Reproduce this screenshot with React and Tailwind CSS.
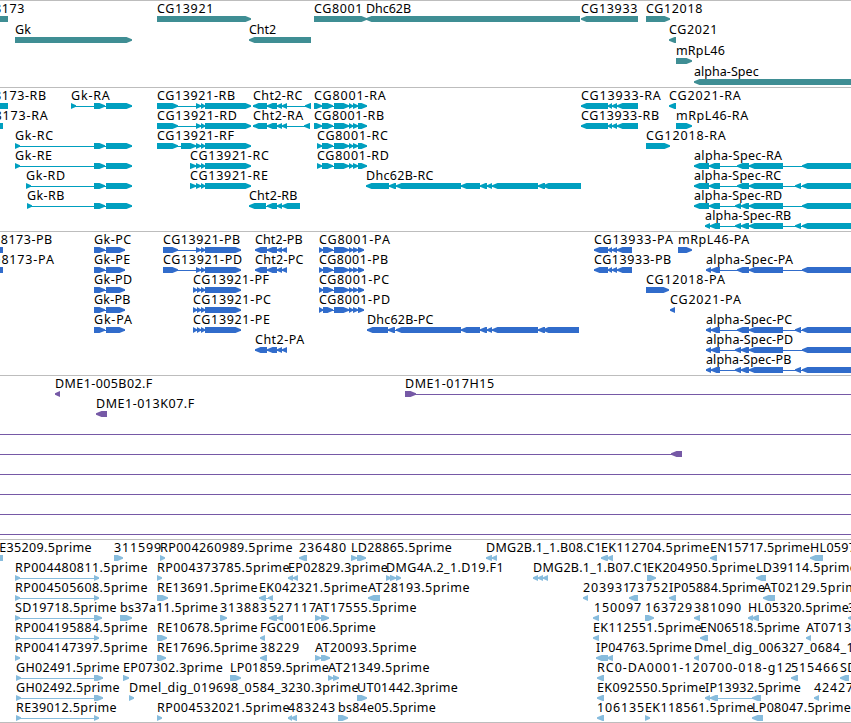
import { useLayoutEffect, useRef } from "react"

const WIDTH = 851
const TIP = 5.5

// advance of each label character in px, anything missing is 7
const ADVANCES = {
    C: 8, G: 9, D: 9, A: 9, R: 8, M: 10, H: 9, K: 8, U: 8, F: 6, L: 6, I: 3,
    m: 12, l: 3, i: 3, r: 5, t: 4, c: 6, s: 6, ".": 4, _: 6, "-": 6.7,
    0: 8, 1: 8, 2: 8, 3: 8, 4: 8, 5: 8, 6: 8, 7: 8, 8: 8, 9: 8,
}

// exon blocks shared between transcripts and proteins
const gk = [[94, 105], [106, 132]]
const gkP = [[94, 105], [106, 125]]
const cgTail = [[196, 201], [201, 205], [205, 251]]
const cgTailP = [[197, 201], [201, 205], [205, 241]]
const chtMid = [[267, 277], [277, 282], [282, 287]]
const cg8001 = [[322, 333], [334, 349], [349, 353], [353, 358], [358, 367]]
const cg8001P = [[319, 323], [323, 333], [334, 349], [349, 353], [353, 358], [358, 364]]
const cg13933 = [[581, 608], [608, 612], [612, 617], [617, 638]]
const cg13933P = [[594, 608], [608, 612], [612, 617], [617, 632]]
const specA = [[737, 749], [749, 783], [802, 870]]
const specC = [[737, 749], [749, 783], [795, 801], [802, 870]]
const specD = [[735, 741], [741, 749], [749, 783], [802, 870]]
const specB = [[735, 741], [741, 749], [749, 783], [795, 801], [802, 870]]
const dhcMid = [[396, 461], [461, 480], [480, 487], [487, 492], [492, 538], [538, 545]]

// feature: [label, label x, strand, exons, line end (optional)]
const tracks = [
    {
        name: "genes",
        className: "h-[87px] text-[#3f8e94]",
        rowClass: "h-[21px]",
        rows: [
            [
                ["CG8173", -24, "-", [[-30, 8]]],
                ["CG13921", 157, "+", [[157, 251]]],
                ["CG8001", 314, "+", [[314, 367]]],
                ["Dhc62B", 366, "-", [[366, 580]]],
                ["CG13933", 581, "-", [[581, 638]]],
                ["CG12018", 646, "+", [[646, 670]]],
            ],
            [
                ["Gk", 15, "+", [[15, 132]]],
                ["Cht2", 249, "-", [[249, 311]]],
                ["CG2021", 669, "-", [[669, 676]]],
            ],
            [["mRpL46", 676, "+", [[676, 692]]]],
            [["alpha-Spec", 694, "-", [[694, 870]]]],
        ],
    },
    {
        name: "transcripts",
        className: "h-36 text-[#009fbf]",
        rowClass: "h-5",
        rows: [
            [
                ["CG8173-RB", -24, "-", [[-30, 8]]],
                ["Gk-RA", 71, "+", [[71, 76], ...gk]],
                ["CG13921-RB", 157, "+", [[157, 178], ...cgTail]],
                ["Cht2-RC", 253, "-", [[253, 267], ...chtMid, [305, 311]]],
                ["CG8001-RA", 314, "+", [[314, 322], ...cg8001]],
                ["CG13933-RA", 581, "-", cg13933],
                ["CG2021-RA", 669, "-", [[669, 676]]],
            ],
            [
                ["CG8173-RA", -24, "-", [[-30, 3]]],
                ["CG13921-RD", 157, "+", [[157, 178], ...cgTail]],
                ["Cht2-RA", 253, "-", [[253, 267], ...chtMid, [304, 310]]],
                ["CG8001-RB", 314, "+", [[314, 322], ...cg8001]],
                ["CG13933-RB", 581, "-", cg13933],
                ["mRpL46-RA", 676, "+", [[676, 692]]],
            ],
            [
                ["Gk-RC", 15, "+", [[15, 20], ...gk]],
                ["CG13921-RF", 157, "+", [[157, 178], [181, 196], ...cgTail]],
                ["CG8001-RC", 317, "+", [[317, 322], ...cg8001]],
                ["CG12018-RA", 646, "+", [[646, 670]]],
            ],
            [
                ["Gk-RE", 15, "+", [[15, 20], ...gk]],
                ["CG13921-RC", 190, "+", [[190, 196], ...cgTail]],
                ["CG8001-RD", 317, "+", [[317, 322], ...cg8001]],
                ["alpha-Spec-RA", 694, "-", [[694, 709], [709, 720], ...specA]],
            ],
            [
                ["Gk-RD", 26, "+", [[26, 31], ...gk]],
                ["CG13921-RE", 190, "+", [[190, 196], ...cgTail]],
                ["Dhc62B-RC", 366, "-", [[366, 389], [389, 396], ...dhcMid, [543, 581]]],
                ["alpha-Spec-RC", 694, "-", [[694, 709], [709, 720], ...specC]],
            ],
            [
                ["Gk-RB", 27, "+", [[27, 32], ...gk]],
                ["Cht2-RB", 249, "-", [[249, 266], [267, 277], [277, 282], [282, 300]]],
                ["alpha-Spec-RD", 694, "-", [[694, 709], [709, 720], ...specD]],
            ],
            [["alpha-Spec-RB", 705, "-", [[705, 710], [710, 720], ...specB]]],
        ],
    },
    {
        name: "proteins",
        className: "h-36 text-[#316ccb]",
        rowClass: "h-5",
        rows: [
            [
                ["CG8173-PB", -17, "-", [[-30, 3]]],
                ["Gk-PC", 94, "+", gkP],
                ["CG13921-PB", 163, "+", [[163, 178], [196, 201], [201, 205], [205, 241]]],
                ["Cht2-PB", 255, "-", [[255, 267], ...chtMid]],
                ["CG8001-PA", 319, "+", cg8001P],
                ["CG13933-PA", 594, "-", cg13933P],
                ["mRpL46-PA", 678, "+", [[678, 692]]],
            ],
            [
                ["CG8173-PA", -17, "-", [[-30, 3]]],
                ["Gk-PE", 94, "+", gkP],
                ["CG13921-PD", 163, "+", [[163, 178], [196, 201], [201, 205], [205, 241]]],
                ["Cht2-PC", 255, "-", [[255, 267], ...chtMid]],
                ["CG8001-PB", 319, "+", cg8001P],
                ["CG13933-PB", 594, "-", cg13933P],
                ["alpha-Spec-PA", 706, "-", [[706, 711], [711, 720], ...specA]],
            ],
            [
                ["Gk-PD", 94, "+", gkP],
                ["CG13921-PF", 193, "+", [[193, 197], ...cgTailP]],
                ["CG8001-PC", 319, "+", cg8001P],
                ["CG12018-PA", 646, "+", [[646, 669]]],
            ],
            [
                ["Gk-PB", 94, "+", gkP],
                ["CG13921-PC", 193, "+", [[193, 197], ...cgTailP]],
                ["CG8001-PD", 319, "+", cg8001P],
                ["CG2021-PA", 670, "-", [[670, 675]]],
            ],
            [
                ["Gk-PA", 94, "+", gkP],
                ["CG13921-PE", 193, "+", [[193, 197], ...cgTailP]],
                ["Dhc62B-PC", 367, "-", [[367, 388], [388, 395], ...dhcMid, [543, 579]]],
                ["alpha-Spec-PC", 706, "-", [[706, 711], [711, 720], ...specC]],
            ],
            [
                ["Cht2-PA", 255, "-", [[255, 267], ...chtMid]],
                ["alpha-Spec-PD", 706, "-", [[706, 711], [711, 720], ...specD]],
            ],
            [["alpha-Spec-PB", 706, "-", [[706, 711], [711, 720], ...specB]]],
        ],
    },
    {
        name: "clones",
        className: "h-[164px] text-[#7659a6]",
        rowClass: "h-5",
        rows: [
            [
                ["DME1-005B02.F", 55, "-", [[55, 60]]],
                ["DME1-017H15", 405, "+", [[405, 416]], 870],
            ],
            [["DME1-013K07.F", 96, "-", [[96, 107]]]],
            [["", 0, "+", [[-10, -5]], 870]],
            [["", 0, "-", [[-20, -10], [671, 682]]]],
            [["", 0, "+", [[-10, -5]], 870]],
            [["", 0, "+", [[-10, -5]], 870]],
            [["", 0, "+", [[-10, -5]], 870]],
            [["", 0, "+", [[-10, -5]], 870]],
        ],
    },
    {
        name: "ests",
        className: "h-[183px] text-[#87bcdd]",
        rowClass: "h-5",
        rows: [
            [
                ["RE35209.5prime", -9, "-", [[-10, 3]]],
                ["311599", 114, "+", [[114, 123]]],
                ["RP004260989.5prime", 160, "+", [[160, 165]]],
                ["236480", 299, "-", [[299, 307]]],
                ["LD28865.5prime", 351, "+", [[351, 357], [357, 366]]],
                ["DMG2B.1_1.B08.C1", 486, "-", [[486, 492], [492, 497]]],
                ["EK112704.5prime", 601, "-", [[601, 608], [607, 613]]],
                ["EN15717.5prime", 710, "-", [[710, 717]]],
                ["HL05972.5prime", 810, "-", [[810, 823]]],
            ],
            [
                ["RP004480811.5prime", 15, "+", [[15, 20], [94, 99]]],
                ["RP004373785.5prime", 157, "+", [[157, 162]]],
                ["EP02829.3prime", 288, "-", [[288, 293], [293, 298]]],
                ["DMG4A.2_1.D19.F1", 386, "+", [[386, 391], [390, 396], [396, 401]]],
                ["DMG2B.1_1.B07.C1", 533, "-", [[533, 538], [538, 543], [543, 548]]],
                ["EK204950.5prime", 647, "+", [[647, 656]]],
                ["LD39114.5prime", 756, "-", [[756, 766]]],
            ],
            [
                ["RP004505608.5prime", 15, "+", [[15, 20], [94, 99]]],
                ["RE13691.5prime", 157, "+", [[157, 168]]],
                ["EK042321.5prime", 259, "-", [[259, 266], [268, 273]]],
                ["AT28193.5prime", 368, "-", [[368, 380]]],
                ["203931", 583, "-", [[583, 588]]],
                ["73752", 629, "-", [[629, 638]]],
                ["IP05884.5prime", 669, "-", [[669, 676]]],
                ["AT02129.5prime", 763, "-", [[763, 775]]],
            ],
            [
                ["SD19718.5prime", 15, "+", [[15, 20], [94, 102]]],
                ["bs37a11.5prime", 120, "+", [[120, 132]]],
                ["313883", 220, "+", [[220, 227]]],
                ["527117", 269, "-", [[269, 277], [277, 283]]],
                ["AT17555.5prime", 315, "+", [[315, 321], [321, 329]]],
                ["150097", 594, "-", [[593, 599]]],
                ["163729", 645, "+", [[645, 654]]],
                ["381090", 694, "-", [[694, 700]]],
                ["HL05320.5prime", 748, "-", [[748, 753], [752, 759]]],
                ["313884", 848, "-", [[848, 860]]],
            ],
            [
                ["RP004195884.5prime", 15, "+", [[15, 20], [94, 99]]],
                ["RE10678.5prime", 157, "+", [[157, 167]]],
                ["FGC001E06.5prime", 260, "-", [[260, 265]]],
                ["EK112551.5prime", 593, "-", [[593, 599]]],
                ["EN06518.5prime", 700, "-", [[700, 708]]],
                ["AT07132.5prime", 806, "-", [[806, 811]]],
            ],
            [
                ["RP004147397.5prime", 15, "+", [[15, 20]]],
                ["RE17696.5prime", 157, "+", [[157, 166]]],
                ["38229", 260, "-", [[260, 267]]],
                ["AT20093.5prime", 315, "+", [[315, 321], [321, 330]]],
                ["IP04763.5prime", 596, "-", [[596, 608], [607, 613]]],
                ["Dmel_dig_006327_0684_1", 694, "-", [[694, 699]]],
            ],
            [
                ["GH02491.5prime", 16, "+", [[16, 21], [94, 103]]],
                ["EP07302.3prime", 123, "+", [[123, 129]]],
                ["LP01859.5prime", 230, "+", [[230, 241]]],
                ["AT21349.5prime", 328, "+", [[328, 333], [333, 339]]],
                ["RC0-DA0001-120700-018-g12", 597, "-", [[597, 604]]],
                ["515466", 791, "-", [[791, 798]]],
                ["SD14682.5prime", 840, "-", [[840, 849]]],
            ],
            [
                ["GH02492.5prime", 16, "+", [[16, 21], [94, 103]]],
                ["Dmel_dig_019698_0584_3230.3prime", 129, "+", [[129, 134]]],
                ["UT01442.3prime", 357, "+", [[357, 367]]],
                ["EK092550.5prime", 597, "-", [[597, 604]]],
                ["IP13932.5prime", 705, "-", [[705, 710], [710, 718], [752, 761]]],
                ["424275", 814, "-", [[814, 819]]],
            ],
            [
                ["RE39012.5prime", 16, "+", [[16, 21], [94, 99]]],
                ["RP004532021.5prime", 157, "+", [[157, 162]]],
                ["483243", 288, "-", [[288, 292], [291, 297]]],
                ["bs84e05.5prime", 338, "+", [[338, 348]]],
                ["106135", 597, "-", [[597, 604]]],
                ["EK118561.5prime", 645, "+", [[645, 650]]],
                ["LP08047.5prime", 752, "-", [[752, 763]]],
            ],
        ],
    },
]

function exonPath([start, end], strand) {
    const tip = Math.min(TIP, end - start)
    if (strand === "+") {
        return `M${start} 0H${end - tip}L${end} 2.3V3.7L${end - tip} 6H${start}Z`
    }
    return `M${end} 0H${start + tip}L${start} 2.3V3.7L${start + tip} 6H${end}Z`
}

function Glyph({ strand, exons, lineEnd }) {
    const start = exons[0][0]
    const end = lineEnd || exons[exons.length - 1][1]
    const hasLine = exons.length > 1 || lineEnd
    return (
        <g>
            {hasLine && <rect x={start} y="3" width={end - start} height="1" />}
            {exons.map((exon, i) => (
                <path key={i} d={exonPath(exon, strand)} />
            ))}
        </g>
    )
}

function Label({ text, x }) {
    const ref = useRef(null)

    // spread the letters so that the label takes its nominal width
    useLayoutEffect(() => {
        const el = ref.current
        el.style.letterSpacing = "0px"
        const target = [...text].reduce((sum, ch) => sum + (ADVANCES[ch] || 7), 0)
        const natural = el.getBoundingClientRect().width
        el.style.letterSpacing = `${(target - natural) / text.length}px`
    }, [text])

    return (
        <span
            ref={ref}
            className="absolute top-0 text-[12.5px] leading-[14px] whitespace-nowrap text-black"
            style={{ left: x }}
        >
            {text}
        </span>
    )
}

function Row({ features, className }) {
    return (
        <div className={`relative shrink-0 ${className}`}>
            <div className="h-3.5">
                {features.map(([label, x]) => label && <Label key={label} text={label} x={x} />)}
            </div>
            <svg className="block h-1.5" width={WIDTH} height="6" viewBox={`0 0 ${WIDTH} 6`} fill="currentColor">
                {features.map(([label, x, strand, exons, lineEnd]) => (
                    <Glyph key={label + x} strand={strand} exons={exons} lineEnd={lineEnd} />
                ))}
            </svg>
        </div>
    )
}

function App() {
    return (
        <main className="flex h-[723px] w-[851px] flex-col overflow-hidden bg-white font-['Noto_Sans',sans-serif]">
            {tracks.map((track) => (
                <section
                    key={track.name}
                    className={`flex shrink-0 flex-col overflow-hidden border-t border-[#bdbdbd] pt-px ${track.className}`}
                >
                    {track.rows.map((features, i) => (
                        <Row key={i} features={features} className={track.rowClass} />
                    ))}
                </section>
            ))}
            <div className="h-px shrink-0 bg-[#bdbdbd]" />
        </main>
    )
}

export default App
